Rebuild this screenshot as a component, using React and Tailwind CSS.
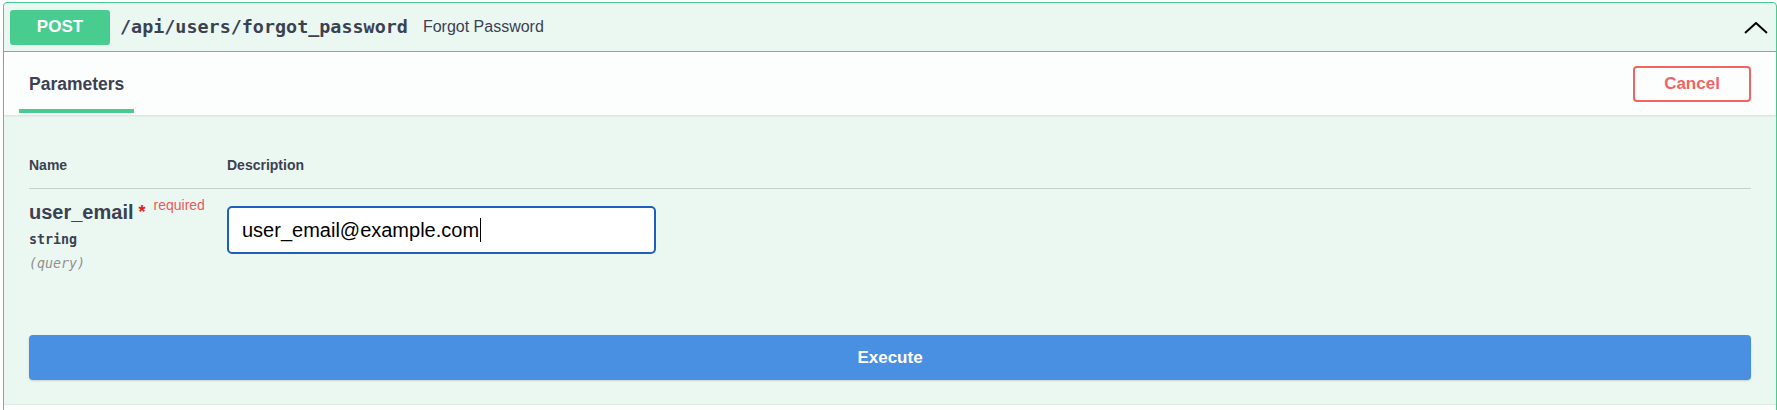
import React from 'react'

const SANS = "font-['Liberation_Sans',Arial,sans-serif]"
const MONO = "font-['DejaVu_Sans_Mono',monospace]"

function Chevron() {
  return (
    <svg width="24" height="12" viewBox="0 0 24 12" className="mr-[8px] mt-[2px]">
      <polyline points="1,11 12,1 23,11" fill="none" stroke="#000" strokeWidth="2" />
    </svg>
  )
}

export default function App() {
  return (
    <div className={`pl-[3px] pt-[2px] bg-white min-h-[410px] overflow-hidden ${SANS} text-[#3b4151]`}>
      <div className="border border-[#49cc90] rounded-[4px] bg-[#ebf8f2] w-[1774px]">
        {/* summary */}
        <div className="flex items-center h-[49px] pl-[6px] border-b border-[#49cc90]">
          <div className="w-[100px] h-[35px] rounded-[3px] bg-[#49cc90] flex items-center justify-center text-white font-bold text-[17px]">
            POST
          </div>
          <span className={`ml-[10px] ${MONO} font-bold text-[18.4px] text-[#3b4151]`}>/api/users/forgot_password</span>
          <span className="ml-[15px] text-[16px] text-[#3b4151]">Forgot Password</span>
          <div className="flex-1" />
          <Chevron />
        </div>

        {/* tab header */}
        <div className="h-[63px] bg-[#fcfefd] flex items-start justify-between pl-[15px] pr-[25px] shadow-[0_1px_2px_rgba(0,0,0,0.1)]">
          <div className="pt-[22px]">
            <div className="px-[10px] text-[17.5px] leading-[20px] font-bold">Parameters</div>
            <div className="h-[4px] mt-[15px] bg-[#49cc90]" />
          </div>
          <button className="mt-[14px] w-[118px] h-[36px] border-2 border-[#f06464] rounded-[4px] text-[#f06464] font-bold text-[17px] bg-transparent">
            Cancel
          </button>
        </div>

        {/* parameters */}
        <div className="pt-[28px] px-[25px] pb-[25px]">
          <div className="flex border-b border-[#c8d0cc] pt-[12px] pb-[13px] text-[14px] leading-[20px] font-bold">
            <div className="w-[198px]">Name</div>
            <div>Description</div>
          </div>
          <div className="flex pt-[11px]">
            <div className="w-[198px]">
              <div className="flex items-start">
                <span className="text-[20px] leading-[24px] font-bold">user_email</span>
                <span className="ml-[5px] text-[#e02020] font-bold text-[18px] leading-[24px]">*</span>
                <span className="ml-[8px] -mt-[5px] text-[14px] leading-[20px] text-[#eb5a5a]">required</span>
              </div>
              <div className={`mt-[6px] ${MONO} font-bold text-[13.3px] leading-[20px]`}>string</div>
              <div className={`mt-[4px] ${MONO} italic text-[13.3px] leading-[20px] text-[#909090]`}>(query)</div>
            </div>
            <div className="pt-[6px]">
              <div className="w-[429px] h-[48px] bg-white border-2 border-[#1f5fbf] rounded-[5px] flex items-center pl-[13px] text-[20px] text-black">
                user_email@example.com
                <span className="inline-block w-[1px] h-[24px] bg-black ml-[1px]" />
              </div>
            </div>
          </div>

          <button className="mt-[61px] w-full h-[45px] rounded-[4px] bg-[#4990e2] text-white font-bold text-[17px] shadow-[0_1px_2px_rgba(0,0,0,0.15)]">
            Execute
          </button>
        </div>

        <div className="h-[20px] bg-[#fcfefd] shadow-[0_-1px_1px_rgba(0,0,0,0.05)]" />
      </div>
    </div>
  )
}
